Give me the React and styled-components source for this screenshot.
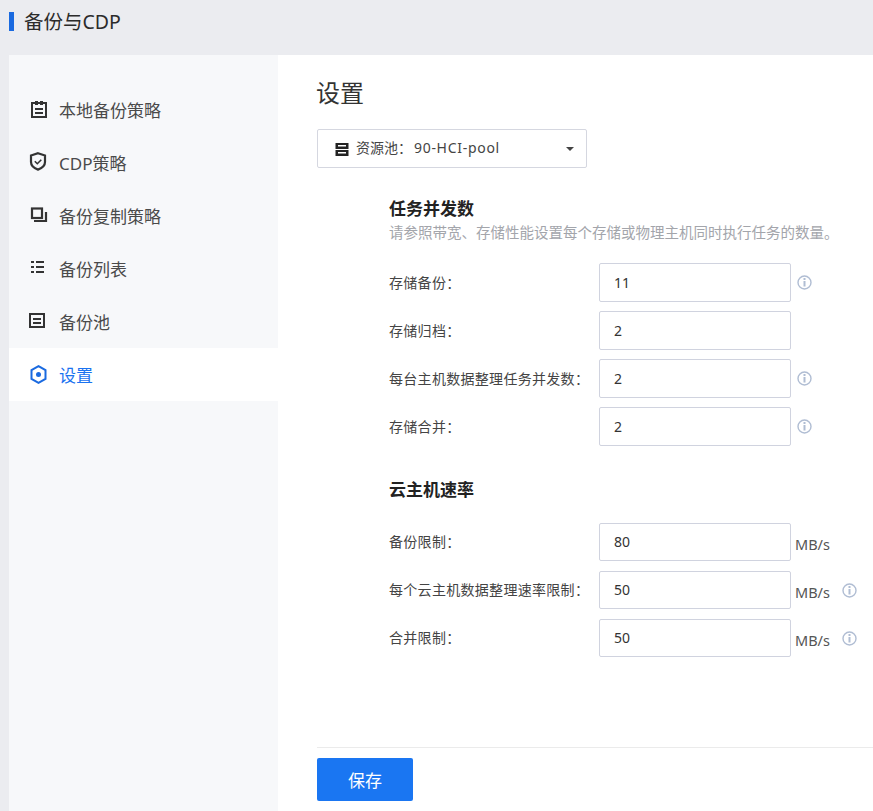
import React from 'react';
import styled, { createGlobalStyle } from 'styled-components';

const Global = createGlobalStyle`
    html, body {
        margin: 0;
        padding: 0;
        background: #fff;
    }
    body {
        font-family: 'Noto Sans', 'Noto Sans CJK SC', sans-serif;
        color: #333;
    }
    * {
        box-sizing: border-box;
    }
`;

const Page = styled.div`
    width: 873px;
    height: 811px;
    overflow: hidden;
    background: #ebecf0;
    display: flex;
    flex-direction: column;
`;

const Header = styled.header`
    height: 55px;
    flex: none;
    padding: 12px 0 0 9px;
    display: flex;
    align-items: flex-start;
`;

const HeaderMark = styled.span`
    width: 5px;
    height: 19px;
    background: #1a6ae0;
`;

const HeaderTitle = styled.h1`
    margin: -3px 0 0 10px;
    font-size: 19.5px;
    line-height: 25px;
    font-weight: 400;
    color: #2b2b2b;
`;

const Body = styled.div`
    flex: 1;
    display: flex;
    padding-left: 9px;
    min-height: 0;
`;

const Sidebar = styled.nav`
    width: 269px;
    flex: none;
    padding-top: 28px;
    background: #f7f8fa;
`;

const NavItem = styled.div`
    height: 53px;
    display: flex;
    align-items: center;
    padding-left: 20px;
    gap: 11px;
    font-size: 17px;
    color: ${(props) => (props.active ? '#1a73f0' : '#4a4a4a')};
    background: ${(props) => (props.active ? '#fff' : 'transparent')};
    svg {
        width: 19px;
        height: 19px;
        flex: none;
        overflow: visible;
    }
`;

const NavLabel = styled.span`
    margin-top: -1px;
`;

const Main = styled.main`
    flex: 1;
    background: #fff;
    padding-left: 39px;
    display: flex;
    flex-direction: column;
    min-width: 0;
`;

const Title = styled.h2`
    margin: 21px 0 0 -1px;
    font-size: 24px;
    line-height: 34px;
    font-weight: 400;
    color: #333;
`;

const PoolSelect = styled.div`
    width: 270px;
    height: 39px;
    margin-top: 19px;
    display: flex;
    align-items: center;
    padding: 0 12px 0 17px;
    border: 1px solid #d5d7e0;
    border-radius: 2px;
    font-size: 14px;
    color: #444;
    svg {
        flex: none;
    }
`;

const PoolText = styled.span`
    flex: 1;
    margin: -3px 0 0 7px;
`;

const PoolName = styled.span`
    margin-left: 2px;
    letter-spacing: 0.7px;
`;

const Caret = styled.span`
    width: 0;
    height: 0;
    border-left: 4px solid transparent;
    border-right: 4px solid transparent;
    border-top: 4px solid #444;
`;

const Form = styled.div`
    flex: 1;
    padding: 28px 0 0 72px;
`;

const SectionTitle = styled.h3`
    margin: 0;
    font-size: 17px;
    line-height: 26px;
    font-weight: 700;
    color: #222;
`;

const SectionDesc = styled.p`
    margin: 0 0 21px;
    font-size: 14.5px;
    line-height: 20px;
    white-space: nowrap;
    color: #a3a5ab;
`;

const Rows = styled.div`
    display: flex;
    flex-direction: column;
    gap: ${(props) => props.gap || 9}px;
    margin-top: ${(props) => props.mt || 0}px;
    margin-bottom: ${(props) => props.mb || 0}px;
`;

const Row = styled.div`
    display: flex;
    align-items: center;
    height: ${(props) => props.h || 39}px;
`;

const Label = styled.label`
    width: 210px;
    flex: none;
    margin-top: -2px;
    font-size: 14px;
    letter-spacing: 0.3px;
    color: #444;
`;

const Field = styled.div`
    width: 192px;
    height: 100%;
    flex: none;
    display: flex;
    align-items: center;
    padding-left: 14px;
    padding-bottom: ${(props) => (props.raised ? 2 : 0)}px;
    border: 1px solid #d0d3df;
    border-radius: 2px;
    font-size: 14px;
    color: #333;
`;

const Unit = styled.span`
    margin-left: 4px;
    margin-top: 3px;
    font-size: 14.5px;
    color: #555;
`;

const InfoWrap = styled.span`
    display: flex;
    margin-left: ${(props) => props.ml}px;
`;

const Footer = styled.footer`
    flex: none;
    height: 64px;
    padding-top: 10px;
    border-top: 1px solid #ebebeb;
`;

const SaveButton = styled.button`
    width: 96px;
    height: 43px;
    border: none;
    border-radius: 2px;
    background: #1a76f2;
    color: #fff;
    font: inherit;
    font-size: 17px;
`;

const LocalIcon = () => (
    <svg viewBox="0 0 19 19" fill="none" stroke="#333" strokeWidth="2">
        <path d="M3 3h14v14H3z" />
        <path d="M6 1h3v4H6zM11 1h3v4h-3z" fill="#333" strokeWidth="0" />
        <path d="M6 9h8M6 13h8" />
    </svg>
);

const ShieldIcon = () => (
    <svg viewBox="0 0 19 19" fill="none" stroke="#333" strokeWidth="2.2">
        <path d="M9 0.200l7 2.300v6.500c0 3.500-3 6.200-7 7.600-4-1.400-7-4.100-7-7.600V2.500z" />
        <path d="M5.800 8.200l2.500 2.500 4-4" strokeWidth="1.600" />
    </svg>
);

const CopyIcon = () => (
    <svg viewBox="0 0 19 19" fill="none" stroke="#333" strokeWidth="2.2">
        <rect x="3" y="2.500" width="10" height="9.500" />
        <path d="M17 6v9H5" />
    </svg>
);

const ListIcon = () => (
    <svg viewBox="0 0 19 19" fill="#333">
        <rect x="2" y="2" width="3" height="2" />
        <rect x="7" y="2" width="8" height="2" />
        <rect x="2" y="7" width="3" height="2" />
        <rect x="7" y="7" width="8" height="2" />
        <rect x="2" y="12" width="3" height="2" />
        <rect x="7" y="12" width="8" height="2" />
    </svg>
);

const PoolIcon = () => (
    <svg viewBox="0 0 19 19" fill="none" stroke="#333" strokeWidth="2">
        <rect x="1" y="2" width="14" height="13" />
        <path d="M4 7h8M4 11h8" />
    </svg>
);

const GearIcon = () => (
    <svg viewBox="0 0 19 19" fill="none" stroke="#1a6ae0" strokeWidth="2">
        <path d="M9.500 1.200l7 4v8.600l-7 4-7-4V5.200z" />
        <circle cx="9.500" cy="9.500" r="2.500" fill="#1a6ae0" stroke="none" />
    </svg>
);

const ServerIcon = () => (
    <svg width="14" height="14" viewBox="0 0 14 14" fill="#222">
        <path d="M0.500 1h13v6h-13zM0.500 8h13v6h-13z" />
        <path d="M3 3h8v1.500H3zM3 10h8v1.500H3z" fill="#fff" />
    </svg>
);

const InfoIcon = () => (
    <svg width="15" height="15" viewBox="0 0 15 15" fill="none">
        <circle cx="7.500" cy="7.500" r="6.500" stroke="#b0bdd3" strokeWidth="1.400" />
        <rect x="6.500" y="3" width="2" height="2" fill="#b0bdd3" />
        <rect x="6.500" y="6" width="2" height="5.500" fill="#b0bdd3" />
    </svg>
);

const navItems = [
    { label: '本地备份策略', icon: <LocalIcon /> },
    { label: 'CDP策略', icon: <ShieldIcon /> },
    { label: '备份复制策略', icon: <CopyIcon /> },
    { label: '备份列表', icon: <ListIcon /> },
    { label: '备份池', icon: <PoolIcon /> },
    { label: '设置', icon: <GearIcon />, active: true },
];

const taskRows = [
    { label: '存储备份：', value: '11', info: true },
    { label: '存储归档：', value: '2' },
    { label: '每台主机数据整理任务并发数：', value: '2', info: true },
    { label: '存储合并：', value: '2', info: true },
];

const rateRows = [
    { label: '备份限制：', value: '80' },
    { label: '每个云主机数据整理速率限制：', value: '50', info: true },
    { label: '合并限制：', value: '50', info: true },
];

function App() {
    return (
        <Page>
            <Global />
            <Header>
                <HeaderMark />
                <HeaderTitle>备份与CDP</HeaderTitle>
            </Header>
            <Body>
                <Sidebar>
                    {navItems.map((item) => (
                        <NavItem key={item.label} active={item.active}>
                            {item.icon}
                            <NavLabel>{item.label}</NavLabel>
                        </NavItem>
                    ))}
                </Sidebar>
                <Main>
                    <Title>设置</Title>
                    <PoolSelect>
                        <ServerIcon />
                        <PoolText>
                            资源池：<PoolName>90-HCI-pool</PoolName>
                        </PoolText>
                        <Caret />
                    </PoolSelect>
                    <Form>
                        <SectionTitle>任务并发数</SectionTitle>
                        <SectionDesc>
                            请参照带宽、存储性能设置每个存储或物理主机同时执行任务的数量。
                        </SectionDesc>
                        <Rows mb={31}>
                            {taskRows.map((row) => (
                                <Row key={row.label}>
                                    <Label>{row.label}</Label>
                                    <Field>{row.value}</Field>
                                    {row.info && (
                                        <InfoWrap ml={6}>
                                            <InfoIcon />
                                        </InfoWrap>
                                    )}
                                </Row>
                            ))}
                        </Rows>
                        <SectionTitle>云主机速率</SectionTitle>
                        <Rows gap={10} mt={20}>
                            {rateRows.map((row) => (
                                <Row key={row.label} h={38}>
                                    <Label>{row.label}</Label>
                                    <Field raised>{row.value}</Field>
                                    <Unit>MB/s</Unit>
                                    {row.info && (
                                        <InfoWrap ml={12}>
                                            <InfoIcon />
                                        </InfoWrap>
                                    )}
                                </Row>
                            ))}
                        </Rows>
                    </Form>
                    <Footer>
                        <SaveButton>保存</SaveButton>
                    </Footer>
                </Main>
            </Body>
        </Page>
    );
}

export default App;
